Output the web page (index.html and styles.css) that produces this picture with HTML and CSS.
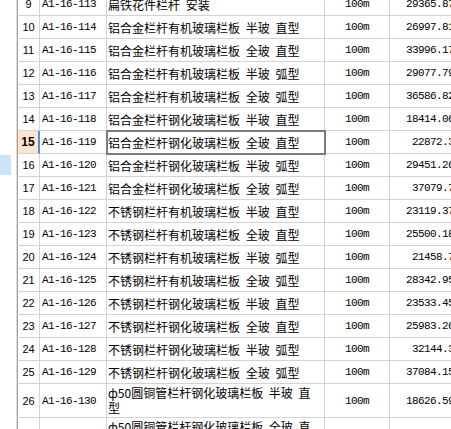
FILE: index.html
```html
<!DOCTYPE html>
<html lang="zh">
<head>
<meta charset="utf-8">
<title>栏杆定额</title>
<link rel="stylesheet" href="styles.css">
</head>
<body>
<div class="side-mark"></div>
<div class="sheet">
  <div class="row"><div class="num">9</div><div class="code">A1-16-113</div><div class="name">扁铁花件栏杆 安装</div><div class="unit">100m</div><div class="amt">29365.87</div></div>
  <div class="row"><div class="num">10</div><div class="code">A1-16-114</div><div class="name">铝合金栏杆有机玻璃栏板 半玻 直型</div><div class="unit">100m</div><div class="amt">26997.81</div></div>
  <div class="row"><div class="num">11</div><div class="code">A1-16-115</div><div class="name">铝合金栏杆有机玻璃栏板 全玻 直型</div><div class="unit">100m</div><div class="amt">33996.17</div></div>
  <div class="row"><div class="num">12</div><div class="code">A1-16-116</div><div class="name">铝合金栏杆有机玻璃栏板 半玻 弧型</div><div class="unit">100m</div><div class="amt">29077.79</div></div>
  <div class="row"><div class="num">13</div><div class="code">A1-16-117</div><div class="name">铝合金栏杆有机玻璃栏板 全玻 弧型</div><div class="unit">100m</div><div class="amt">36586.82</div></div>
  <div class="row"><div class="num">14</div><div class="code">A1-16-118</div><div class="name">铝合金栏杆钢化玻璃栏板 半玻 直型</div><div class="unit">100m</div><div class="amt">18414.06</div></div>
  <div class="row active"><div class="num">15</div><div class="code">A1-16-119</div><div class="name selected">铝合金栏杆钢化玻璃栏板 全玻 直型</div><div class="unit">100m</div><div class="amt">22872.3</div></div>
  <div class="row"><div class="num">16</div><div class="code">A1-16-120</div><div class="name">铝合金栏杆钢化玻璃栏板 半玻 弧型</div><div class="unit">100m</div><div class="amt">29451.26</div></div>
  <div class="row"><div class="num">17</div><div class="code">A1-16-121</div><div class="name">铝合金栏杆钢化玻璃栏板 全玻 弧型</div><div class="unit">100m</div><div class="amt">37079.7</div></div>
  <div class="row"><div class="num">18</div><div class="code">A1-16-122</div><div class="name">不锈钢栏杆有机玻璃栏板 半玻 直型</div><div class="unit">100m</div><div class="amt">23119.37</div></div>
  <div class="row"><div class="num">19</div><div class="code">A1-16-123</div><div class="name">不锈钢栏杆有机玻璃栏板 全玻 直型</div><div class="unit">100m</div><div class="amt">25500.18</div></div>
  <div class="row"><div class="num">20</div><div class="code">A1-16-124</div><div class="name">不锈钢栏杆有机玻璃栏板 半玻 弧型</div><div class="unit">100m</div><div class="amt">21458.7</div></div>
  <div class="row"><div class="num">21</div><div class="code">A1-16-125</div><div class="name">不锈钢栏杆有机玻璃栏板 全玻 弧型</div><div class="unit">100m</div><div class="amt">28342.95</div></div>
  <div class="row"><div class="num">22</div><div class="code">A1-16-126</div><div class="name">不锈钢栏杆钢化玻璃栏板 半玻 直型</div><div class="unit">100m</div><div class="amt">23533.45</div></div>
  <div class="row"><div class="num">23</div><div class="code">A1-16-127</div><div class="name">不锈钢栏杆钢化玻璃栏板 全玻 直型</div><div class="unit">100m</div><div class="amt">25983.26</div></div>
  <div class="row"><div class="num">24</div><div class="code">A1-16-128</div><div class="name">不锈钢栏杆钢化玻璃栏板 半玻 弧型</div><div class="unit">100m</div><div class="amt">32144.3</div></div>
  <div class="row"><div class="num">25</div><div class="code">A1-16-129</div><div class="name">不锈钢栏杆钢化玻璃栏板 全玻 弧型</div><div class="unit">100m</div><div class="amt">37084.15</div></div>
  <div class="row tall"><div class="num">26</div><div class="code">A1-16-130</div><div class="name wrap">ф50圆铜管栏杆钢化玻璃栏板 半玻 直<br>型</div><div class="unit">100m</div><div class="amt">18626.59</div></div>
  <div class="row tall"><div class="num">27</div><div class="code">A1-16-131</div><div class="name wrap">ф50圆铜管栏杆钢化玻璃栏板 全玻 直<br>型</div><div class="unit">100m</div><div class="amt">34117.43</div></div>
</div>
</body>
</html>
```
FILE: styles.css
```css
html, body {
  margin: 0;
  padding: 0;
  background: #ffffff;
}
body {
  width: 451px;
  height: 429px;
  overflow: hidden;
  position: relative;
  font-family: "Noto Sans CJK SC", sans-serif;
  font-size: 12px;
  color: #000;
}
.side-mark {
  position: absolute;
  left: 0;
  top: 155px;
  width: 11px;
  height: 20px;
  background: #cce4f8;
}
.sheet {
  margin-left: 16px;
  margin-top: -7px;
  border-left: 1px solid #dcdcdc;
  width: 460px;
}
.row {
  display: grid;
  grid-template-columns: 23px 67px 218px 65px 67px;
  height: 23px;
}
.row.tall {
  height: 34px;
}
.row > div {
  box-sizing: border-box;
  border-right: 1px solid #d3d3d3;
  border-bottom: 1px solid #d3d3d3;
  display: flex;
  align-items: center;
  white-space: nowrap;
  overflow: hidden;
}
.row > .num {
  border-left: 1px solid #a2a2a2;
  justify-content: center;
  font-family: "Liberation Sans", sans-serif;
  font-size: 11px;
}
.row.active > .num {
  background: #fde5c9;
  font-weight: bold;
  font-size: 12px;
  border-right: 2px solid #4a92ec;
}
.code, .unit, .amt {
  font-family: "Liberation Mono", monospace;
  font-size: 11px;
  letter-spacing: -0.6px;
}
.code {
  padding-left: 2px;
}
.unit {
  justify-content: center;
}
.amt {
  justify-content: flex-end;
  padding-right: 2px;
}
.row > .name {
  padding-left: 1px;
  word-spacing: 3px;
  overflow: visible;
}
.row > .name.wrap {
  align-items: flex-start;
  line-height: 15px;
  padding-top: 1px;
  white-space: normal;
  display: block;
  overflow: hidden;
}
.row > .name.selected {
  position: relative;
}
.name.selected::after {
  content: "";
  position: absolute;
  left: -1px;
  top: -1px;
  right: -2px;
  bottom: -2px;
  border: 2px solid #7c7c7c;
}
```
